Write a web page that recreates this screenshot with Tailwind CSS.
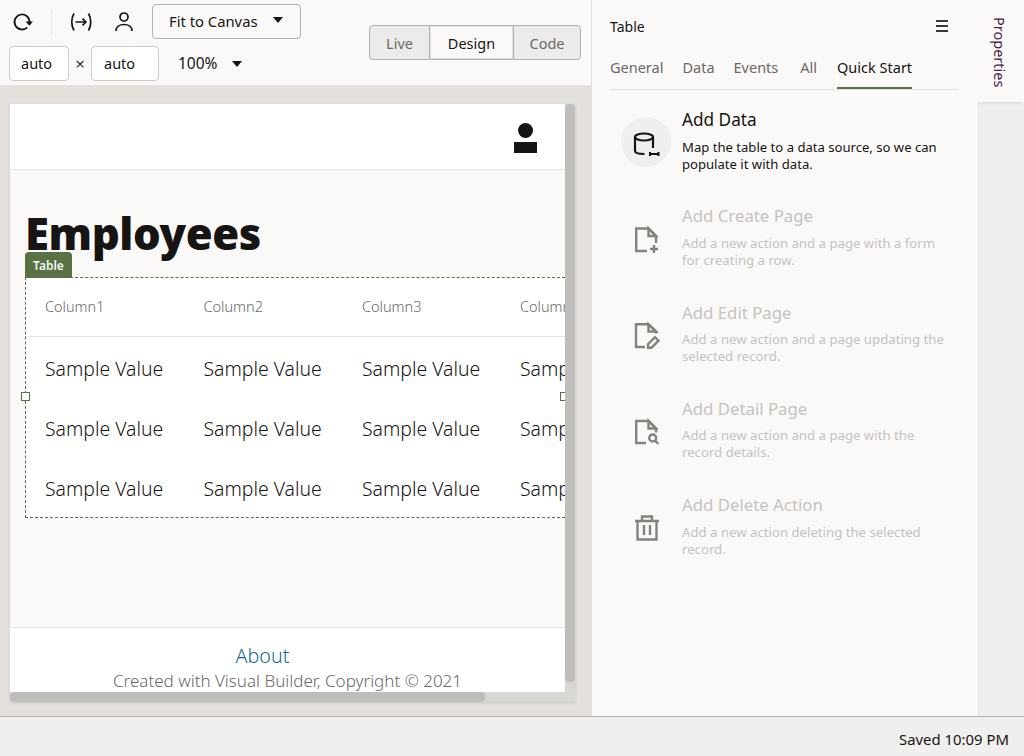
<!DOCTYPE html>
<html>
<head>
<meta charset="utf-8">
<script src="https://cdn.jsdelivr.net/npm/@tailwindcss/browser@4"></script>
</head>
<body class="m-0">
<div class="w-[1024px] h-[756px] overflow-hidden flex flex-col bg-[#fbf9f8] text-[#161513] font-['Noto_Sans','Open_Sans',sans-serif]">
  <div class="h-[716px] flex shrink-0">
    <!-- left -->
    <div class="w-[592px] shrink-0 flex flex-col border-r border-[#e4e1dc]">
      <div class="h-[85px] shrink-0 relative pl-[9px] pr-[10px] pt-[4px] flex justify-between">
        <div class="flex flex-col gap-[7px]">
          <div class="flex items-center h-[35px]">
            <svg class="w-[24px] h-[24px] ml-[1px]" viewBox="0 0 24 24" fill="none" stroke="#161513" stroke-width="1.8"><path d="M17.300 17.300A7.500 7.500 0 1 1 19.500 12"/><path d="M15.500 11.500h7.500l-3.700 4.300z" fill="#161513" stroke="none"/></svg>
            <div class="w-px h-[26px] bg-[#e8e6e2] ml-[17px]"></div>
            <svg class="w-[24px] h-[24px] ml-[17px]" viewBox="0 0 24 24" fill="none" stroke="#161513" stroke-width="1.7"><path d="M5 3.500c-3 5-3 12 0 17"/><path d="M19.500 3.500c3 5 3 12 0 17"/><path d="M6.500 12h10.500M13.500 8.700l3.400 3.300-3.400 3.300"/></svg>
            <svg class="w-[24px] h-[24px] ml-[19px]" viewBox="0 0 24 24" fill="none" stroke="#161513" stroke-width="1.7"><circle cx="12" cy="7" r="4"/><path d="M4 21c0-4 3.500-6.500 8-6.500s8 2.500 8 6.500"/></svg>
            <div class="ml-[16px] w-[149px] h-[35px] border border-[#b5b2ad] rounded-[4px] flex items-center pl-[16px] text-[14.800px]">Fit to Canvas<span class="ml-[15px] w-0 h-0 border-x-[5.500px] border-x-transparent border-t-[6px] border-t-[#161513] -mt-[4px]"></span></div>
          </div>
          <div class="flex items-center h-[35px]">
            <div class="w-[60px] h-[35px] border border-[#cfccc7] rounded-[4px] bg-white pl-[11px] flex items-center text-[14.500px]">auto</div>
            <span class="w-[22px] text-center text-[17px] text-[#3a3835]">×</span>
            <div class="w-[68px] h-[35px] border border-[#cfccc7] rounded-[4px] bg-white pl-[12px] flex items-center text-[14.500px]">auto</div>
            <span class="ml-[19px] pt-[1px] text-[15.500px]">100%</span>
            <span class="ml-[15px] w-0 h-0 border-x-[5.500px] border-x-transparent border-t-[6px] border-t-[#161513]"></span>
          </div>
        </div>
        <div class="mt-[21px] h-[35px] flex border border-[#b5b2ad] rounded-[4px] text-[14.500px] text-[#6b6865] bg-[#edebe9] overflow-hidden">
          <div class="w-[60px] flex items-center justify-center border-r border-[#b5b2ad] pt-[2px]">Live</div>
          <div class="w-[83px] flex items-center justify-center bg-[#fbf9f8] border border-[#e4e1dc] text-[#161513] pt-[2px]">Design</div>
          <div class="w-[67px] flex items-center justify-center border-l border-[#b5b2ad] pt-[2px]">Code</div>
        </div>
      </div>
      <div class="flex-1 bg-[#e4e1dc] pl-[10px] pt-[19px] pr-[15px]">
        <div class="w-[565px] h-[598px] relative bg-[#d9d7d3] shadow-[0_1px_3px_rgba(0,0,0,0.12)] overflow-hidden">
          <div class="w-[555px] h-[588px] bg-[#fbf9f8] flex flex-col overflow-hidden">
            <div class="h-[66px] shrink-0 bg-white border-b border-[#e8e6e3] flex justify-end pr-[28px] pt-[19px]">
              <div class="w-[24px] flex flex-col items-center gap-[3px]">
                <div class="w-[15px] h-[15px] rounded-full bg-[#161513]"></div>
                <div class="w-[23px] h-[11px] bg-[#161513] mt-[1px]"></div>
              </div>
            </div>
            <div class="h-[457px] shrink-0 pl-[15px] relative">
              <div class="text-[43.600px] font-black leading-[58px] mt-[34px] tracking-[-0.4px] h-[49px]">Employees</div>
              <div class="relative w-[47px] h-[26px] mt-[-1px] pt-[2px] bg-[#587246] text-[#f5f4f2] rounded-t-[4px] text-[12px] font-semibold flex items-center justify-center z-10">Table</div>
              <div class="w-[540px] h-[241px] -mt-px bg-white border-y border-l border-dashed border-[#587246] overflow-hidden relative">
                <div class="h-[59px] border-b border-[#e8e6e3] flex items-center text-[14.500px] text-[#6b6865] pl-[19px] font-light">
                  <span class="w-[158.500px] shrink-0">Column1</span><span class="w-[158.500px] shrink-0">Column2</span><span class="w-[158px] shrink-0">Column3</span><span class="w-[158px] shrink-0">Column4</span>
                </div>
                <div class="h-[60px] pt-[4px] flex items-center text-[19.400px] pl-[19px] font-light whitespace-nowrap">
                  <span class="w-[158.500px] shrink-0">Sample Value</span><span class="w-[158.500px] shrink-0">Sample Value</span><span class="w-[158px] shrink-0">Sample Value</span><span class="w-[158px] shrink-0">Sample Value</span>
                </div>
                <div class="h-[60px] pt-[4px] flex items-center text-[19.400px] pl-[19px] font-light whitespace-nowrap">
                  <span class="w-[158.500px] shrink-0">Sample Value</span><span class="w-[158.500px] shrink-0">Sample Value</span><span class="w-[158px] shrink-0">Sample Value</span><span class="w-[158px] shrink-0">Sample Value</span>
                </div>
                <div class="h-[60px] pt-[4px] flex items-center text-[19.400px] pl-[19px] font-light whitespace-nowrap">
                  <span class="w-[158.500px] shrink-0">Sample Value</span><span class="w-[158.500px] shrink-0">Sample Value</span><span class="w-[158px] shrink-0">Sample Value</span><span class="w-[158px] shrink-0">Sample Value</span>
                </div>
              </div>
              <div class="absolute left-[11px] top-[222px] w-[9px] h-[9px] bg-white border border-[#587246]"></div>
              <div class="absolute left-[550px] top-[222px] w-[9px] h-[9px] bg-white border border-[#587246]"></div>
            </div>
            <div class="flex-1 bg-white border-t border-[#e8e6e3] flex flex-col items-center pt-[14px] overflow-hidden">
              <div class="text-[19.700px] leading-[28px] text-[#0f6b96] font-light mr-[50px]">About</div>
              <div class="text-[17px] leading-[22px] text-[#6b6865] font-light">Created with Visual Builder, Copyright © 2021</div>
            </div>
          </div>
          <div class="absolute left-[555px] top-0 w-[10px] h-[578px] rounded-[4px] bg-[#bfbdb9]"></div>
          <div class="absolute left-0 top-[588px] h-[10px] w-[475px] rounded-[4px] bg-[#bfbdb9]"></div>
        </div>
      </div>
    </div>
    <!-- right -->
    <div class="flex-1 flex">
      <div class="w-[387px] shrink-0 border-r border-[#e8e6e3] pl-[18px]">
        <div class="w-[349px] flex items-center justify-between pt-[8px] h-[44px] pr-[11px] text-[14px]">
          <span>Table</span>
          <svg class="w-[12px] h-[12px]" viewBox="0 0 12 12" fill="#3a3835"><rect y="0" width="12" height="2"/><rect y="5" width="12" height="2"/><rect y="10" width="12" height="2"/></svg>
        </div>
        <div class="w-[349px] h-[46px] border-b border-[#e4e1dc] flex text-[14.500px] text-[#6b6865] gap-[19px] pt-[13px]">
          <span>General</span><span>Data</span><span>Events</span><span class="ml-[3px]">All</span>
          <span class="ml-[1px] h-[32px] border-b-2 border-[#587246] text-[#161513]">Quick Start</span>
        </div>
        <div class="pl-[11px] pt-[17px] flex flex-col">
          <div class="h-[97px] flex">
            <div class="w-[50px] h-[50px] mt-[10px] rounded-full bg-[#f1efed] flex items-center justify-center">
              <svg class="w-[26px] h-[26px] overflow-visible" viewBox="0 0 26 26" fill="none" stroke="#161513" stroke-width="2.200"><ellipse cx="11" cy="8" rx="9" ry="3.500"/><path d="M2 8v14c0 2 3 3 9.500 3"/><path d="M20 8v11"/><path d="M17 23v4M25.500 23v4M17 25h8.500" stroke-width="2"/></svg>
            </div>
            <div class="ml-[11px]">
              <div class="text-[17.200px] leading-[24px] mt-[1px]">Add Data</div>
              <div class="text-[13.100px] leading-[17px] mt-[7px] w-[270px]">Map the table to a data source, so we can populate it with data.</div>
            </div>
          </div>
          <div class="h-[97px] flex text-[#c5c2be]">
            <div class="w-[50px] h-[50px] mt-[10px] flex items-center justify-center">
              <svg class="w-[26px] h-[26px] overflow-visible" viewBox="0 0 26 26" fill="none" stroke="#85827e" stroke-width="2.400"><path d="M14 25H3.200V2.500H15.500L23 10v7"/><path d="M15.500 2.500V10H23z"/><path d="M21 19v8M17 23h8"/></svg>
            </div>
            <div class="ml-[11px]">
              <div class="text-[16.800px] leading-[24px]">Add Create Page</div>
              <div class="text-[13.200px] leading-[17px] mt-[7px] w-[270px]">Add a new action and a page with a form for creating a row.</div>
            </div>
          </div>
          <div class="h-[96px] flex text-[#c5c2be]">
            <div class="w-[50px] h-[50px] mt-[10px] flex items-center justify-center">
              <svg class="w-[26px] h-[26px] overflow-visible" viewBox="0 0 26 26" fill="none" stroke="#85827e" stroke-width="2.400"><path d="M12 24H3V1.300h12.500L23 8.500v2"/><path d="M15.500 1.300V8.500H23z"/><path d="M15 24.700v-3.500l7-7 3.500 3.500-7 7z"/></svg>
            </div>
            <div class="ml-[11px]">
              <div class="text-[16.800px] leading-[24px]">Add Edit Page</div>
              <div class="text-[13.200px] leading-[17px] mt-[6px] w-[270px]">Add a new action and a page updating the selected record.</div>
            </div>
          </div>
          <div class="h-[96px] flex text-[#c5c2be]">
            <div class="w-[50px] h-[50px] mt-[10px] flex items-center justify-center">
              <svg class="w-[26px] h-[26px] overflow-visible" viewBox="0 0 26 26" fill="none" stroke="#85827e" stroke-width="2.400"><path d="M13 24H3.200V2H15.500L23 9.500v4"/><path d="M15.500 2V9.500H23z"/><circle cx="19.700" cy="19" r="3.500"/><path d="M22.300 21.800l3.200 3.200"/></svg>
            </div>
            <div class="ml-[11px]">
              <div class="text-[16.800px] leading-[24px]">Add Detail Page</div>
              <div class="text-[13.200px] leading-[17px] mt-[6px] w-[270px]">Add a new action and a page with the record details.</div>
            </div>
          </div>
          <div class="h-[96px] flex text-[#c5c2be]">
            <div class="w-[50px] h-[50px] mt-[10px] flex items-center justify-center">
              <svg class="w-[26px] h-[26px] overflow-visible" viewBox="0 0 26 26" fill="none" stroke="#85827e" stroke-width="2.400"><path d="M2 6h24M9 6V1.500h10V6"/><path d="M4.500 6v18.500h19V6"/><path d="M11 10v10M17 10v10"/></svg>
            </div>
            <div class="ml-[11px]">
              <div class="text-[16.800px] leading-[24px]">Add Delete Action</div>
              <div class="text-[13.200px] leading-[17px] mt-[7px] w-[270px]">Add a new action deleting the selected record.</div>
            </div>
          </div>
        </div>
      </div>
      <div class="flex-1 bg-[#f0efed] relative">
        <div class="h-[102px] -ml-px bg-[#fbf9f8] shadow-[0_3px_3px_-2px_rgba(0,0,0,0.12)] flex justify-center pt-[17px] pr-[3px]">
          <span class="[writing-mode:vertical-rl] text-[14.500px] leading-[20px] text-[#4a2440] h-[72px]">Properties</span>
        </div>
      </div>
    </div>
  </div>
  <div class="flex-1 bg-[#f0efed] border-t border-[#b5b2ad] flex items-center justify-end pr-[15px] pt-[6px] text-[14.900px]">Saved 10:09 PM</div>
</div>
</body>
</html>
